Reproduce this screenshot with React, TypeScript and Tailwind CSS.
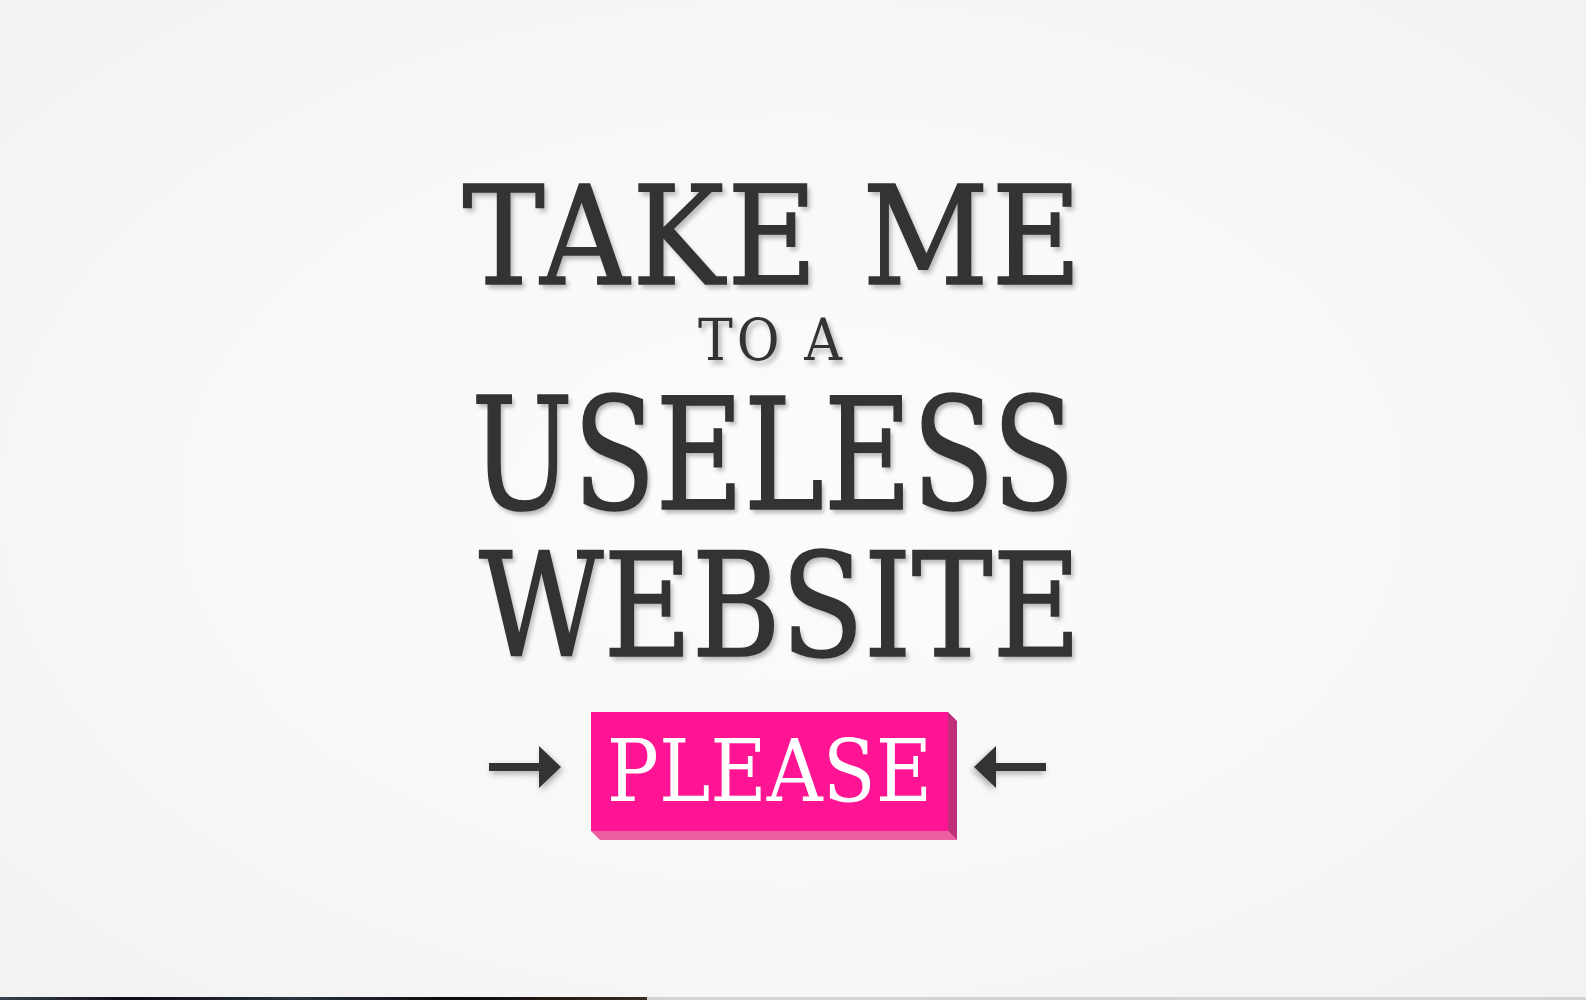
import React from 'react';

const Arrow = ({ flip }: { flip?: boolean }) => (
  <svg
    width="72"
    height="44"
    viewBox="0 0 72 44"
    className={`mb-[10px] ${flip ? '-scale-x-100 -ml-[4px]' : ''} [filter:drop-shadow(2px_3px_3px_rgba(0,0,0,0.3))]`}
  >
    <rect x="0" y="18" width="52" height="8" fill="#333" />
    <polygon points="50,1 72,22 50,43" fill="#333" />
  </svg>
);

const App = () => {
  const shadow = '[text-shadow:3px_4px_5px_rgba(0,0,0,0.28)] [-webkit-text-stroke:1.5px_#333]';

  return (
    <div className="h-[1000px] flex flex-col bg-[radial-gradient(ellipse_at_center,#fcfcfc_0%,#f8f8f8_55%,#f2f2f2_100%)] overflow-hidden">
      <main
        className="flex-1 flex flex-col items-center pt-[168px] pr-[46px] text-[#333] [font-stretch:condensed]"
        style={{ fontFamily: '"DejaVu Serif", serif' }}
      >
        <h1 className={`text-[137px] leading-none tracking-[3px] ml-[7px] ${shadow}`}>TAKE ME</h1>
        <div className="mt-[6px] text-[58px] leading-none tracking-[4px] ml-[4px] [text-shadow:3px_4px_5px_rgba(0,0,0,0.28)]">TO A</div>
        <div className={`mt-[8px] text-[156px] leading-none ml-[6px] scale-x-[0.86] ${shadow}`}>USELESS</div>
        <div className={`mt-[1px] text-[144px] leading-none ml-[20px] scale-x-[0.935] ${shadow}`}>WEBSITE</div>

        {/* button row */}
        <div className="mt-[34px] -ml-[5px] flex items-center gap-[30px]">
          <Arrow />
          <button className="relative">
            <span className="absolute left-0 top-full w-[calc(100%+9px)] h-[9px] bg-[#ee5fa0] [clip-path:polygon(0_0,calc(100%-9px)_0,100%_100%,9px_100%)]" />
            <span className="absolute left-full top-0 w-[9px] h-[calc(100%+9px)] bg-[#c0307a] [clip-path:polygon(0_0,100%_9px,100%_100%,0_calc(100%-9px))]" />
            <span className="block w-[357px] h-[119px] bg-[#ff1493] text-white text-[86px] leading-[119px] text-center">
              PLEASE
            </span>
          </button>
          <Arrow flip />
        </div>
      </main>

      {/* bottom strip */}
      <div className="h-[3px] flex">
        <div className="w-[647px] bg-[linear-gradient(90deg,#3b4150,#0c0d12_20%,#2b3140_45%,#0a0a0a_70%,#3a2c24)]" />
        <div className="flex-1 bg-[#d4d4d4]" />
      </div>
    </div>
  );
};

export default App;
